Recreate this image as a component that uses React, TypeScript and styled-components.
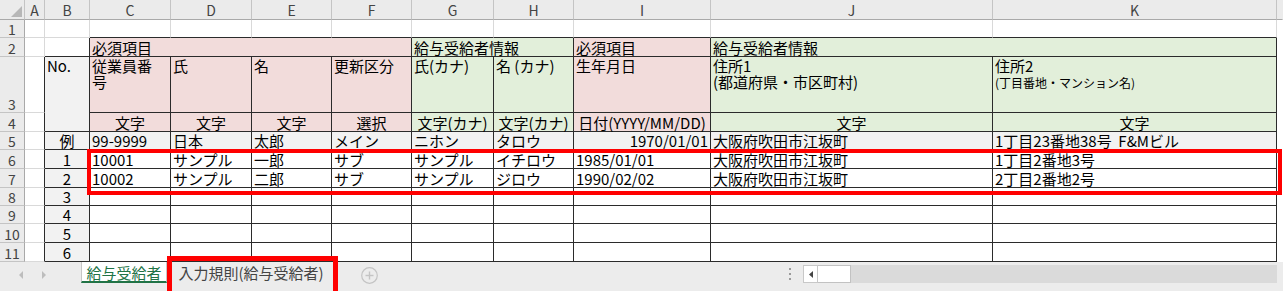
import React from "react";
import styled, { createGlobalStyle } from "styled-components";

const GlobalStyle = createGlobalStyle`
  html, body { margin: 0; padding: 0; background: #ffffff; }
  body { font-family: "Noto Sans CJK JP", "Noto Sans", sans-serif; color: #000; }
  * { box-sizing: border-box; }
`;

const PINK = "#f2dcdb";
const GREEN = "#e2efda";
const GRAY = "#f2f2f2";
const WHITE = "#ffffff";
const DARK = "#2b2b2b";
const LIGHT = "#d9d9d9";
const HEAD_BG = "#ebebeb";
const HEAD_LINE = "#c4c4c4";

const COLS = ["A", "B", "C", "D", "E", "F", "G", "H", "I", "J", "K"];
const ROW_COUNT = 11;

const Page = styled.div`
  position: relative;
  width: 1283px;
  height: 291px;
  overflow: hidden;
  background: #ffffff;
`;

const Sheet = styled.div`
  display: grid;
  grid-template-columns: 25px 20px 45px 81px 81px 80px 80px 82px 80px 137px 282px 284px 6px;
  grid-template-rows: 20px 18px 19px 56px 19px 18px 19px 19px 18px 18px 19px 19px;
`;

const Corner = styled.div`
  grid-column: 1;
  grid-row: 1;
  background: ${HEAD_BG};
  border-right: 1px solid ${HEAD_LINE};
  border-bottom: 1px solid #a9a9a9;
  display: flex;
  align-items: flex-end;
  justify-content: flex-end;
  padding: 0 2px 2px 0;
`;

const ColHead = styled.div<{ $c: number; $last?: boolean }>`
  grid-column: ${(p) => p.$c};
  grid-row: 1;
  background: ${HEAD_BG};
  border-right: 1px solid ${(p) => (p.$last ? "transparent" : HEAD_LINE)};
  border-bottom: 1px solid #a9a9a9;
  display: flex;
  align-items: center;
  justify-content: center;
  font-size: 14px;
  line-height: 16px;
  color: #444;
`;

const RowHead = styled.div<{ $r: number }>`
  grid-column: 1;
  grid-row: ${(p) => p.$r};
  background: ${HEAD_BG};
  border-right: 1px solid #a9a9a9;
  border-bottom: 1px solid ${HEAD_LINE};
  display: flex;
  align-items: flex-end;
  justify-content: center;
  font-size: 14px;
  line-height: 16px;
  color: #444;
`;

const Cell = styled.div<{
  $c: number;
  $r: number;
  $cs: number;
  $rs: number;
  $bg: string;
  $br: string;
  $bb: string;
  $h: "left" | "center" | "right";
  $v: "top" | "bottom";
}>`
  grid-column: ${(p) => p.$c} / span ${(p) => p.$cs};
  grid-row: ${(p) => p.$r} / span ${(p) => p.$rs};
  background: ${(p) => p.$bg};
  border-right: 1px solid ${(p) => p.$br};
  border-bottom: 1px solid ${(p) => p.$bb};
  display: flex;
  flex-direction: column;
  justify-content: ${(p) => (p.$v === "top" ? "flex-start" : "flex-end")};
  align-items: ${(p) =>
    p.$h === "left" ? "flex-start" : p.$h === "center" ? "center" : "flex-end"};
  padding: ${(p) => (p.$v === "top" ? "1px 2px 0 2px" : "0 2px")};
  font-size: 15px;
  line-height: 16px;
  white-space: pre;
  min-width: 0;
`;

const Filler = styled.div<{ $r: number }>`
  grid-column: 13;
  grid-row: ${(p) => p.$r};
  background: #ffffff;
`;

const SubLine = styled.span`
  display: block;
  font-size: 12px;
  line-height: 17px;
`;

const Triangle = styled.svg`
  display: block;
`;

/* ---------- tab bar ---------- */

const TabBar = styled.div`
  display: flex;
  align-items: flex-start;
  height: 29px;
  background: #ececec;
`;

const NavArea = styled.div`
  width: 81px;
  height: 21px;
  display: flex;
  align-items: center;
  padding-left: 19px;
  gap: 17px;
  margin-top: 2px;
`;

const NavArrow = styled.svg`
  display: block;
`;

const Tab = styled.div<{ $active?: boolean; $w: number }>`
  width: ${(p) => p.$w}px;
  height: 21px;
  display: flex;
  align-items: center;
  justify-content: center;
  font-size: 15px;
  line-height: 17px;
  white-space: nowrap;
  color: ${(p) => (p.$active ? "#217346" : "#444444")};
  background: ${(p) => (p.$active ? "#ffffff" : "transparent")};
  border-left: 1px solid ${(p) => (p.$active ? "#c6c6c6" : "transparent")};
  border-right: 1px solid ${(p) => (p.$active ? "#c6c6c6" : "transparent")};
  border-bottom: 2px solid ${(p) => (p.$active ? "#217346" : "transparent")};
  padding-top: 1px;
`;

const PlusButton = styled.svg`
  display: block;
  margin-left: 26px;
  margin-top: 5px;
`;

const Spacer = styled.div`
  flex: 1;
`;

const DotsArea = styled.div`
  width: 20px;
  height: 29px;
  display: flex;
  flex-direction: column;
  align-items: flex-start;
  padding: 6px 0 0 6px;
  gap: 3px;
`;

const Dot = styled.span`
  width: 2px;
  height: 2px;
  background: #9a9a9a;
  display: block;
`;

const HScroll = styled.div`
  width: 474px;
  height: 18px;
  margin-top: 3px;
  margin-right: 6px;
  display: flex;
  background: #dadada;
`;

const ScrollBtn = styled.div`
  width: 15px;
  height: 18px;
  background: #ffffff;
  border: 1px solid #c8c8c8;
  display: flex;
  align-items: center;
  justify-content: center;
`;

const Thumb = styled.div`
  width: 33px;
  height: 18px;
  background: #ffffff;
  border: 1px solid #c2c2c2;
  border-left: none;
`;

/* ---------- overlays ---------- */

const Highlight = styled.div<{ $x: number; $y: number; $w: number; $h: number; $t: number }>`
  position: absolute;
  left: ${(p) => p.$x}px;
  top: ${(p) => p.$y}px;
  width: ${(p) => p.$w}px;
  height: ${(p) => p.$h}px;
  border: ${(p) => p.$t}px solid #ff0000;
  pointer-events: none;
`;

type Spec = {
  text?: React.ReactNode;
  bg?: string;
  h?: "left" | "center" | "right";
  v?: "top" | "bottom";
  cs?: number;
  rs?: number;
};

const specs: Record<string, Spec> = {};
const put = (r: number, col: string, s: Spec) => {
  specs[`${r}-${COLS.indexOf(col)}`] = s;
};

// row 2
put(2, "C", { text: "必須項目", bg: PINK, cs: 4 });
put(2, "G", { text: "給与受給者情報", bg: GREEN, cs: 2 });
put(2, "I", { text: "必須項目", bg: PINK });
put(2, "J", { text: "給与受給者情報", bg: GREEN, cs: 2 });
// row 3
put(3, "B", { text: "No.", bg: GRAY, v: "top", rs: 2 });
put(3, "C", { text: "従業員番\n号", bg: PINK, v: "top" });
put(3, "D", { text: "氏", bg: PINK, v: "top" });
put(3, "E", { text: "名", bg: PINK, v: "top" });
put(3, "F", { text: "更新区分", bg: PINK, v: "top" });
put(3, "G", { text: "氏(カナ)", bg: GREEN, v: "top" });
put(3, "H", { text: "名 (カナ)", bg: GREEN, v: "top" });
put(3, "I", { text: "生年月日", bg: PINK, v: "top" });
put(3, "J", { text: "住所1\n(都道府県・市区町村)", bg: GREEN, v: "top" });
put(3, "K", {
  text: (
    <>
      住所2
      <SubLine>(丁目番地・マンション名)</SubLine>
    </>
  ),
  bg: GREEN,
  v: "top",
});
// row 4
put(4, "C", { text: "文字", bg: PINK, h: "center" });
put(4, "D", { text: "文字", bg: PINK, h: "center" });
put(4, "E", { text: "文字", bg: PINK, h: "center" });
put(4, "F", { text: "選択", bg: PINK, h: "center" });
put(4, "G", { text: "文字(カナ)", bg: GREEN, h: "center" });
put(4, "H", { text: "文字(カナ)", bg: GREEN, h: "center" });
put(4, "I", { text: "日付(YYYY/MM/DD)", bg: PINK, h: "center" });
put(4, "J", { text: "文字", bg: GREEN, h: "center" });
put(4, "K", { text: "文字", bg: GREEN, h: "center" });

const dataRows: { r: number; no: string; vals: string[]; bg: string }[] = [
  {
    r: 5,
    no: "例",
    bg: GRAY,
    vals: ["99-9999", "日本", "太郎", "メイン", "ニホン", "タロウ", "1970/01/01", "大阪府吹田市江坂町", "1丁目23番地38号  F&Mビル"],
  },
  {
    r: 6,
    no: "1",
    bg: WHITE,
    vals: ["10001", "サンプル", "一郎", "サブ", "サンプル", "イチロウ", "1985/01/01", "大阪府吹田市江坂町", "1丁目2番地3号"],
  },
  {
    r: 7,
    no: "2",
    bg: WHITE,
    vals: ["10002", "サンプル", "二郎", "サブ", "サンプル", "ジロウ", "1990/02/02", "大阪府吹田市江坂町", "2丁目2番地2号"],
  },
  { r: 8, no: "3", bg: WHITE, vals: [] },
  { r: 9, no: "4", bg: WHITE, vals: [] },
  { r: 10, no: "5", bg: WHITE, vals: [] },
  { r: 11, no: "6", bg: WHITE, vals: [] },
];

dataRows.forEach((row) => {
  put(row.r, "B", { text: row.no, bg: GRAY, h: "center" });
  COLS.slice(2).forEach((col, i) => {
    const text = row.vals[i];
    put(row.r, col, {
      text,
      bg: row.bg,
      h: col === "I" && row.r === 5 ? "right" : "left",
    });
  });
});

const inTable = (r: number, ci: number) =>
  (r >= 2 && r <= 11 && ci >= 2 && ci <= 10) || (r >= 3 && r <= 11 && ci === 1);

function buildCells() {
  const covered = new Set<string>();
  const out: React.ReactNode[] = [];
  for (let r = 1; r <= ROW_COUNT; r++) {
    for (let ci = 0; ci < COLS.length; ci++) {
      const key = `${r}-${ci}`;
      if (covered.has(key)) continue;
      const s = specs[key] || {};
      const cs = s.cs ?? 1;
      const rs = s.rs ?? 1;
      for (let dr = 0; dr < rs; dr++)
        for (let dc = 0; dc < cs; dc++) covered.add(`${r + dr}-${ci + dc}`);
      const self = inTable(r, ci);
      const rightC = ci + cs;
      const belowR = r + rs;
      const br = self || inTable(r, rightC) ? DARK : LIGHT;
      const bb = self || inTable(belowR, ci) ? DARK : LIGHT;
      out.push(
        <Cell
          key={key}
          $c={ci + 2}
          $r={r + 1}
          $cs={cs}
          $rs={rs}
          $bg={s.bg ?? WHITE}
          $br={br}
          $bb={bb}
          $h={s.h ?? "left"}
          $v={s.v ?? "bottom"}
        >
          {s.text ? <span>{s.text}</span> : null}
        </Cell>
      );
    }
  }
  return out;
}

export default function App() {
  const rows = Array.from({ length: ROW_COUNT }, (_, i) => i + 1);
  return (
    <Page>
      <GlobalStyle />
      <Sheet>
        <Corner>
          <Triangle width="11" height="11" viewBox="0 0 11 11">
            <polygon points="11,0 11,11 0,11" fill="#b7b7b7" />
          </Triangle>
        </Corner>
        {COLS.map((c, i) => (
          <ColHead key={c} $c={i + 2}>
            {c}
          </ColHead>
        ))}
        <ColHead $c={13} $last />
        {rows.map((r) => (
          <RowHead key={`rh${r}`} $r={r + 1}>
            {r}
          </RowHead>
        ))}
        {buildCells()}
        {rows.map((r) => (
          <Filler key={`f${r}`} $r={r + 1} />
        ))}
      </Sheet>
      <TabBar>
        <NavArea>
          <NavArrow width="5" height="8" viewBox="0 0 5 8">
            <polygon points="4,0 4,8 0,4" fill="#bdbdbd" />
          </NavArrow>
          <NavArrow width="5" height="8" viewBox="0 0 5 8">
            <polygon points="1,0 1,8 5,4" fill="#bdbdbd" />
          </NavArrow>
        </NavArea>
        <Tab $active $w={86}>給与受給者</Tab>
        <Tab $w={168}>入力規則(給与受給者)</Tab>
        <PlusButton width="17" height="17" viewBox="0 0 17 17">
          <circle cx="8.5" cy="8.5" r="7.8" fill="none" stroke="#c4c4c4" strokeWidth="1.2" />
          <line x1="8.5" y1="4.5" x2="8.5" y2="12.5" stroke="#c4c4c4" strokeWidth="1.4" />
          <line x1="4.5" y1="8.5" x2="12.5" y2="8.5" stroke="#c4c4c4" strokeWidth="1.4" />
        </PlusButton>
        <Spacer />
        <DotsArea>
          <Dot />
          <Dot />
          <Dot />
        </DotsArea>
        <HScroll>
          <ScrollBtn>
            <svg width="4" height="7" viewBox="0 0 4 7">
              <polygon points="4,0 4,7 0,3.5" fill="#444" />
            </svg>
          </ScrollBtn>
          <Thumb />
        </HScroll>
      </TabBar>
      <Highlight $x={87} $y={149} $w={1195} $h={46} $t={4} />
      <Highlight $x={167} $y={256} $w={171} $h={40} $t={5} />
    </Page>
  );
}
